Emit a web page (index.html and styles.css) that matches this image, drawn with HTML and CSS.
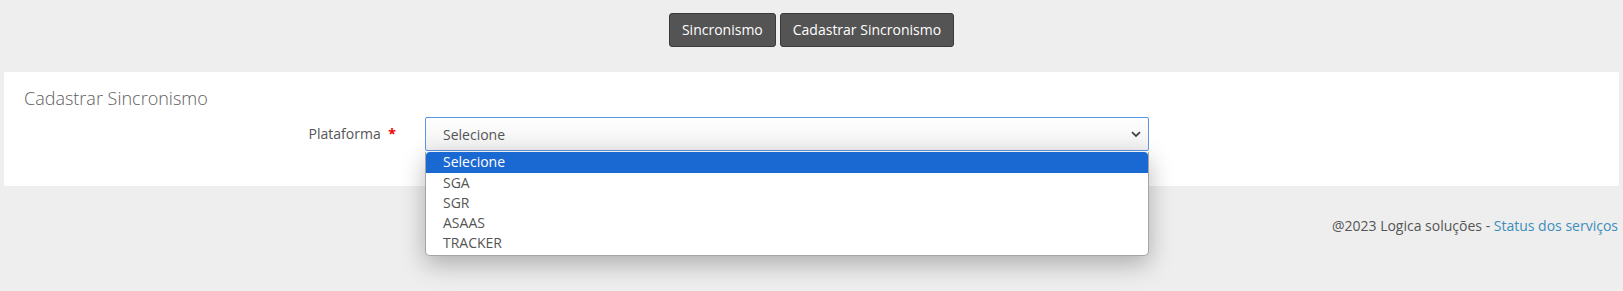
FILE: index.html
```html
<!DOCTYPE html>
<html lang="pt-BR">
<head>
<meta charset="utf-8">
<title>Cadastrar Sincronismo</title>
<link rel="stylesheet" href="styles.css">
</head>
<body>
<div class="toolbar">
  <button class="btn">Sincronismo</button>
  <button class="btn">Cadastrar Sincronismo</button>
</div>
<div class="card">
  <h2 class="card-title">Cadastrar Sincronismo</h2>
  <div class="form-row">
    <label class="form-label">Plataforma <span class="req">*</span></label>
    <div class="field">
      <div class="select">
        <span>Selecione</span>
        <svg class="chev" width="10" height="7" viewBox="0 0 10 7"><path d="M1 1.2 L5 5 L9 1.2" fill="none" stroke="#444" stroke-width="1.8"/></svg>
      </div>
      <ul class="options">
        <li class="opt active">Selecione</li>
        <li class="opt">SGA</li>
        <li class="opt">SGR</li>
        <li class="opt">ASAAS</li>
        <li class="opt">TRACKER</li>
      </ul>
    </div>
  </div>
</div>
<footer class="footer">@2023 Logica soluções - <a href="#" class="link">Status dos serviços</a></footer>
</body>
</html>
```
FILE: styles.css
```css
html, body {
  margin: 0;
  padding: 0;
  background: #eeeeee;
  font-family: "Open Sans", "Liberation Sans", sans-serif;
  font-size: 14px;
  color: #555;
}
html { height: 100%; }
body { min-height: 100%; }
.toolbar {
  display: flex;
  justify-content: center;
  gap: 4px;
  padding-top: 13px;
}
.btn {
  font-family: "Open Sans", "Liberation Sans", sans-serif;
  font-size: 14px;
  color: #fff;
  background: #545454;
  border: 1px solid #3a3a3a;
  border-radius: 3px;
  height: 34px;
  padding: 0 12px;
  line-height: 32px;
  cursor: pointer;
}
.card {
  background: #fff;
  margin: 25px 4px 0 4px;
  border-radius: 2px;
  padding: 14px 0 35px 0;
}
.card-title {
  margin: 0 0 0 20px;
  font-size: 18px;
  font-weight: 300;
  line-height: 25px;
  color: #606060;
}
.form-row {
  display: flex;
  margin-top: 6px;
}
.form-label {
  width: 392px;
  padding-right: 15px;
  text-align: right;
  line-height: 34px;
  color: #555;
}
.req {
  color: #e00;
  font-weight: bold;
  margin-left: 4px;
}
.field {
  position: relative;
  margin-left: 14px;
  width: 724px;
}
.select {
  box-sizing: border-box;
  height: 34px;
  border: 1px solid #5b95e8;
  border-radius: 2px;
  background: linear-gradient(#ffffff, #f1f1f1);
  display: flex;
  align-items: center;
  justify-content: space-between;
  padding: 0 7px 0 17px;
  color: #555;
}
.chev { display: block; }
.options {
  position: absolute;
  top: 35px;
  left: 0;
  width: 724px;
  box-sizing: border-box;
  margin: 0;
  padding: 0 0 2px 0;
  list-style: none;
  background: #fff;
  border: 1px solid #a5a5a5;
  border-top: none;
  border-radius: 0 0 5px 5px;
  box-shadow: 0 8px 24px rgba(0,0,0,0.28);
  z-index: 5;
}
.opt {
  height: 20px;
  line-height: 20px;
  padding-left: 17px;
  color: #555;
}
.opt.active {
  height: 21px;
  background: #1a68d2;
  color: #fff;
  border-radius: 4px 4px 0 0;
}
.footer {
  text-align: right;
  padding: 30px 5px 0 0;
  line-height: 20px;
  color: #555;
}
.link {
  color: #3c8dbc;
  text-decoration: none;
}
```
